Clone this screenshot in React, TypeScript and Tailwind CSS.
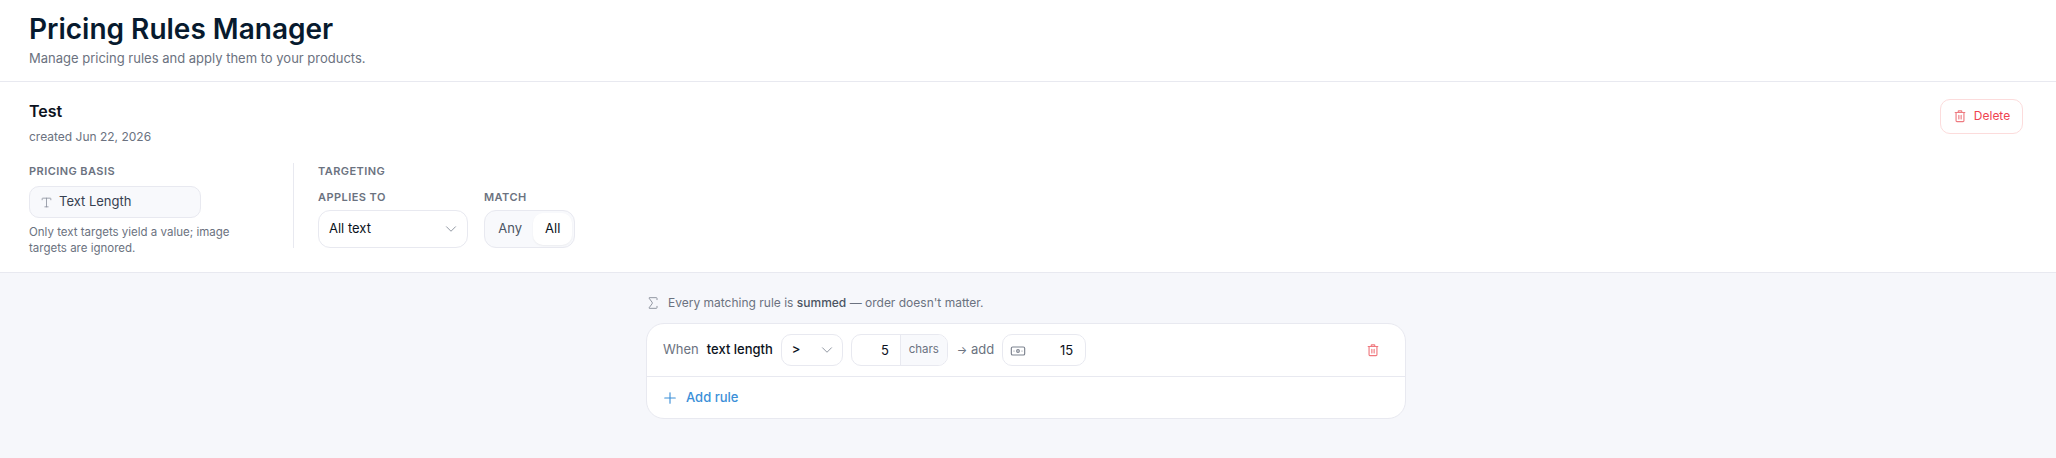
import { Banknote, ChevronDown, Plus, Sigma, Type } from "lucide-react";

function TrashIcon({ className }: { className: string }) {
  return <svg viewBox="0 0 16 16" fill="none" stroke="currentColor" strokeWidth="1.3" strokeLinecap="round" strokeLinejoin="round" className={className}>
    <path d="M2.5 4h11M6 4V2.6c0-.3.2-.5.5-.5h3c.3 0 .5.2.5.5V4M3.5 4v9.5c0 .6.4 1 1 1h7c.6 0 1-.4 1-1V4M6.7 7.2v4.2M9.3 7.2v4.2" />
  </svg>;
}

function FieldLabel({ children }: { children: string }) {
  return <p className="text-[11px] leading-4 font-semibold tracking-[0.04em] text-[#6b7280] uppercase">{children}</p>;
}

function Header() {
  return <header className="h-[82px] border-b border-[#e8e9f0] px-[29px] pt-[11px]">
    <h1 className="text-[28px] leading-9 font-semibold text-[#071a2e]">Pricing Rules Manager</h1>
    <p className="mt-[1px] text-[13px] leading-5 text-[#6b7280]">Manage pricing rules and apply them to your products.</p>
  </header>;
}

function RuleSettings() {
  return <section className="flex h-[191px] items-start justify-between border-b border-[#e8e9f0] pt-[17px] pr-[33px] pl-[29px]">
    <div>
      <h2 className="text-base leading-6 font-semibold text-[#0b1220]">Test</h2>
      <p className="mt-[6px] text-xs leading-4 text-[#6b7280]">created Jun 22, 2026</p>
      <div className="mt-[18px] flex">
        <div className="w-[265px] border-r border-[#e8e9f0] pr-[24px]">
          <div className="w-[215px]">
            <FieldLabel>Pricing basis</FieldLabel>
            <div className="mt-[7px] flex h-8 w-[172px] items-center gap-[6px] rounded-[10px] border border-[#e8e9f0] bg-[#f8f9fc] pl-[10px] text-[13px] text-[#374151]">
              <Type className="size-[13px] text-[#8a909c]" strokeWidth={1.5} />
              Text Length
            </div>
            <p className="mt-[6px] -mb-[8px] text-[11.5px] leading-4 text-[#6b7280]">Only text targets yield a value; image targets are ignored.</p>
          </div>
        </div>
        <div className="pl-[24px]">
          <FieldLabel>Targeting</FieldLabel>
          <div className="mt-[10px] flex gap-[16px]">
            <div>
              <FieldLabel>Applies to</FieldLabel>
              <div className="mt-[5px] flex h-[38px] w-[150px] items-center justify-between rounded-xl border border-[#e8e9f0] bg-white pr-[7px] pl-[10px] text-[13px] text-[#0b1220]">
                All text
                <ChevronDown className="size-[18px] text-[#8a909c]" strokeWidth={1.25} />
              </div>
            </div>
            <div>
              <FieldLabel>Match</FieldLabel>
              <div className="mt-[5px] flex h-[38px] w-[91px] items-center rounded-xl border border-[#e8e9f0] bg-[#f8f9fc] p-[2px] text-[13px]">
                <span className="flex h-8 w-[47px] items-center justify-center text-[#4b5563]">Any</span>
                <span className="flex h-8 w-[39px] items-center justify-center rounded-[10px] bg-white text-[#0b1220] shadow-[0_1px_2px_rgba(0,0,0,0.05)]">All</span>
              </div>
            </div>
          </div>
        </div>
      </div>
    </div>
    <button type="button" className="flex h-[35px] w-[83px] items-center justify-center gap-[7px] rounded-[10px] border border-[#fcdcdc] bg-white pb-[2px] text-xs text-[#ef4350]">
      <TrashIcon className="size-[14px] text-[#ee7a80]" />
      Delete
    </button>
  </section>;
}

function RuleRow() {
  return <div className="flex h-[53px] items-center border-b border-[#e8e9f0] pr-[25px] pl-[16px] text-[13px]">
    <span className="text-[#6b7280]">When</span>
    <span className="ml-[8px] font-medium text-[#0b1220]">text length</span>
    <div className="ml-[8px] flex h-8 w-[62px] items-center justify-between rounded-[10px] border border-[#e8e9f0] pr-[6px] pl-[10px] text-[#0b1220]">
      <span className="font-medium">&gt;</span>
      <ChevronDown className="size-[18px] text-[#8a909c]" strokeWidth={1.25} />
    </div>
    <div className="ml-[8px] flex h-8 w-[97px] overflow-hidden rounded-[10px] border border-[#e8e9f0]">
      <span className="flex w-[49px] items-center justify-end border-r border-[#e8e9f0] pt-[1px] pr-[11px] text-[#0b1220]">5</span>
      <span className="flex flex-1 items-center justify-center bg-[#f8f9fc] text-[11.5px] text-[#6b7280]">chars</span>
    </div>
    <span className="ml-[9px] text-[#6b7280]"><span className="text-[11px]">→</span> add</span>
    <div className="ml-[8px] flex h-8 w-[84px] items-center justify-between rounded-[10px] border border-[#e8e9f0] pt-[1px] pr-[12px] pl-[7px] text-[#0b1220]">
      <Banknote className="size-[16px] text-[#7d838f]" strokeWidth={1.75} />
      15
    </div>
    <TrashIcon className="ml-auto size-[14px] text-[#f0787e]" />
  </div>;
}

export default function App() {
  return <div className="min-h-screen bg-[#f6f7fb] font-['Inter',sans-serif]">
    <div className="bg-white">
      <Header />
      <RuleSettings />
    </div>
    <main className="pr-[4px]">
      <div className="mx-auto w-[760px] pt-[20px]">
        <p className="flex items-center gap-[7px] text-xs leading-5 text-[#6b7280]">
          <Sigma className="-ml-[1px] size-[16px] text-[#7d838f]" strokeWidth={1.25} />
          <span>Every matching rule is <b className="font-medium text-[#4b5563]">summed</b> — order doesn't matter.</span>
        </p>
        <div className="mt-[10px] overflow-hidden rounded-[18px] border border-[#e8e9f0] bg-white">
          <RuleRow />
          <button type="button" className="flex h-[41px] items-center gap-[7px] pl-[14px] text-[13px] font-medium text-[#3b8fd8]">
            <Plus className="size-[18px]" strokeWidth={1.5} />
            Add rule
          </button>
        </div>
      </div>
    </main>
  </div>;
}
